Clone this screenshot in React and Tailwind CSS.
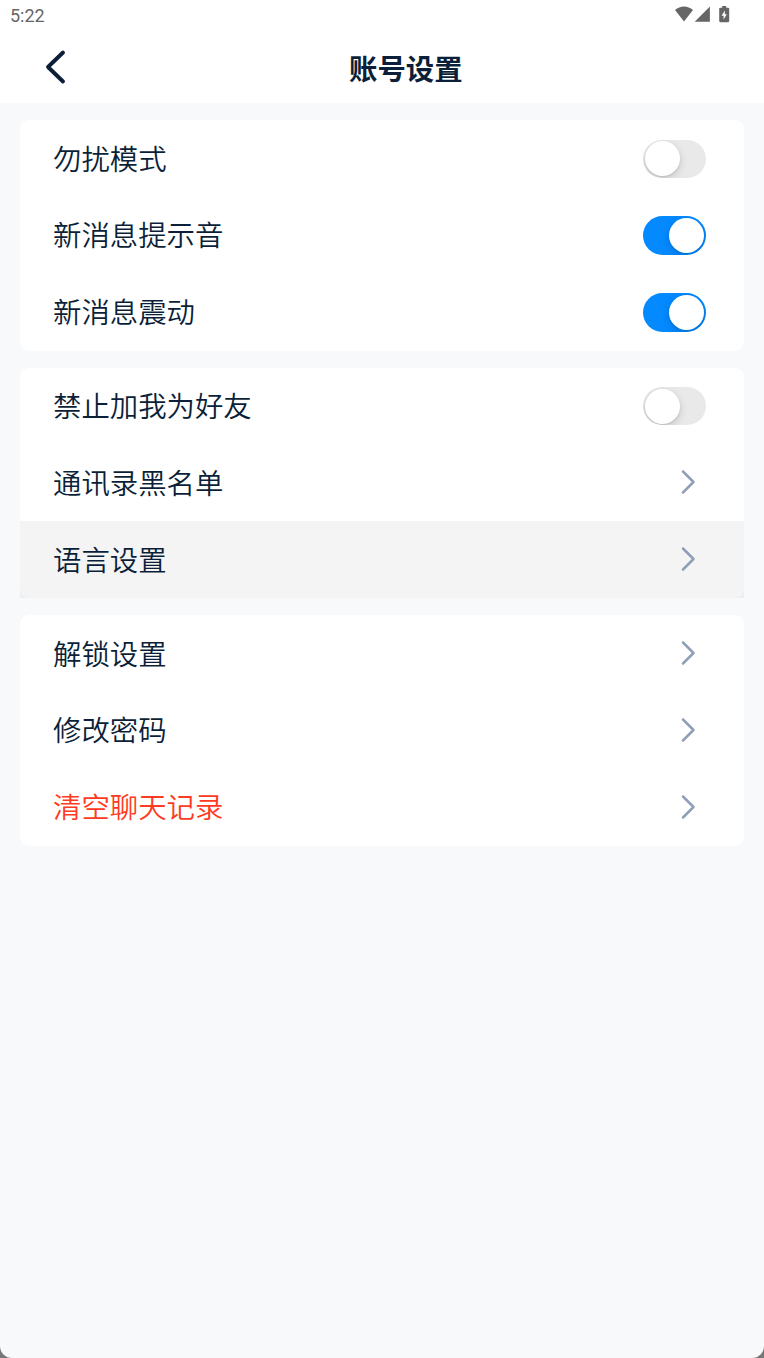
import React, { useState } from 'react';

const groups = [
  [
    { key: 'dnd', label: '勿扰模式', type: 'switch' },
    { key: 'sound', label: '新消息提示音', type: 'switch' },
    { key: 'vibrate', label: '新消息震动', type: 'switch' },
  ],
  [
    { key: 'blockAdd', label: '禁止加我为好友', type: 'switch' },
    { key: 'blacklist', label: '通讯录黑名单', type: 'link' },
    { key: 'language', label: '语言设置', type: 'link' },
  ],
  [
    { key: 'unlock', label: '解锁设置', type: 'link' },
    { key: 'password', label: '修改密码', type: 'link' },
    { key: 'clear', label: '清空聊天记录', type: 'link', danger: true },
  ],
];

function StatusBar() {
  return (
    <div className="flex h-8 items-center justify-between pl-[10px] pr-[34px] text-[#666666]">
      <span className="font-[Roboto,sans-serif] text-[18px] leading-8">5:22</span>
      <div className="flex h-8 items-start pt-[6px]">
        <svg width="19" height="16" viewBox="0 0 19 16" fill="currentColor">
          <path d="M0 4.100C2.700 1.700 5.700 0.500 9 0.500s6.300 1.200 9 3.600L9 15.600z" />
        </svg>
        <svg width="16" height="16" viewBox="0 0 16 16" fill="currentColor">
          <path d="M15.900 0.600v15.200H0.700z" />
        </svg>
        <svg className="ml-[9px]" width="11" height="17" viewBox="0 0 11 17">
          <path
            d="M3.200 0h4v1.700h1.900q1.100 0 1.100 1.100v12.300q0 1.100-1.100 1.100H1.300q-1.100 0-1.100-1.100V2.800q0-1.100 1.100-1.100h1.900z"
            fill="currentColor"
          />
          <path d="M5.800 4.500v3.700h2L4.600 13.400V9.700h-2z" fill="#fff" />
        </svg>
      </div>
    </div>
  );
}

function Header() {
  return (
    <div className="flex h-[71px] items-center">
      <button className="mb-[2px] ml-[44px] w-6">
        <svg width="24" height="36" viewBox="0 0 24 36" fill="none">
          <path
            d="M19 3.500L4 18L19 32.500"
            stroke="#0c1f38"
            strokeWidth="3.900"
            strokeLinecap="round"
            strokeLinejoin="round"
          />
        </svg>
      </button>
      <h1 className="ml-[281px] text-[28.400px] font-bold leading-[71px]">账号设置</h1>
    </div>
  );
}

function Switch({ on, onClick }) {
  return (
    <button
      onClick={onClick}
      className={`mr-[38px] flex h-[38.400px] w-[63px] items-center overflow-hidden rounded-full p-[1.600px] ${
        on ? 'justify-end bg-[#0489ff]' : 'justify-start bg-[#e9e9e9]'
      }`}
    >
      <span className="h-[35.200px] w-[35.200px] rounded-full bg-white shadow-[0_3px_8px_rgba(0,0,0,0.15),0_1px_2px_rgba(0,0,0,0.1)]" />
    </button>
  );
}

function Chevron() {
  return (
    <svg className="mb-[1.200px] mr-[47px]" width="18" height="26" viewBox="0 0 18 26" fill="none">
      <path
        d="M4 2.500L14.500 13L4 23.500"
        stroke="#909fb8"
        strokeWidth="2.500"
        strokeLinecap="round"
        strokeLinejoin="round"
      />
    </svg>
  );
}

export default function App() {
  const [pressed, setPressed] = useState('language');
  const [switches, setSwitches] = useState({ dnd: false, sound: true, vibrate: true, blockAdd: false });

  const toggle = (key) => setSwitches((prev) => ({ ...prev, [key]: !prev[key] }));

  return (
    <div className="h-[1358px] w-full bg-[#777777]">
      <div className="flex h-full flex-col overflow-hidden rounded-b-[12px] bg-[#f8f9fb] font-['Noto_Sans_CJK_SC',sans-serif] text-[#0c1f38]">
        <div className="h-[103px] shrink-0 bg-white">
          <StatusBar />
          <Header />
        </div>

        <div className="flex flex-col gap-[17.100px] px-5 pt-[17.400px]">
          {groups.map((items, i) => (
            <div key={i} className="rounded-[9px] bg-white">
              {items.map((item) => (
                <div
                  key={item.key}
                  onPointerDown={() => item.type === 'link' && setPressed(item.key)}
                  className={`flex h-[76.800px] items-center justify-between pl-[33px] ${
                    pressed === item.key ? 'bg-black/[0.042]' : ''
                  }`}
                >
                  <span
                    className={`mb-[2.500px] text-[28.400px] font-[350] leading-[74px] ${
                      item.danger ? 'text-[#ff3a22]' : ''
                    }`}
                  >
                    {item.label}
                  </span>
                  {item.type === 'switch' ? (
                    <Switch on={switches[item.key]} onClick={() => toggle(item.key)} />
                  ) : (
                    <Chevron />
                  )}
                </div>
              ))}
            </div>
          ))}
        </div>
      </div>
    </div>
  );
}
